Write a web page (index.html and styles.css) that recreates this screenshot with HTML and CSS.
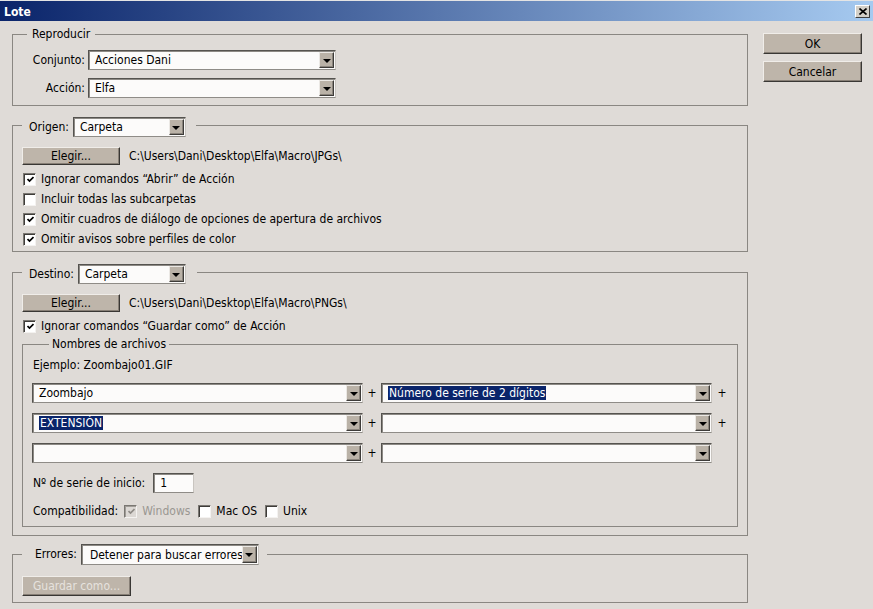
FILE: index.html
```html
<!DOCTYPE html>
<html lang="es">
<head>
<meta charset="utf-8">
<title>Lote</title>
<link rel="stylesheet" href="styles.css">
</head>
<body>
<div class="window">
  <div class="titlebar">
    <span class="title">Lote</span>
    <span class="close"><svg width="8" height="7" viewBox="0 0 8 7"><path d="M0.5 0.5 L7.5 6.5 M7.5 0.5 L0.5 6.5" stroke="#000" stroke-width="1.6" fill="none"/></svg></span>
  </div>
  <div class="content">
    <div class="main">
      <fieldset class="grp g-repro">
        <legend class="lg-text">Reproducir</legend>
        <div class="form-grid">
          <span class="flabel">Conjunto:</span>
          <div class="select s-repro"><span class="val">Acciones Dani</span><span class="arrow"><span class="tri"></span></span></div>
          <span class="flabel">Acción:</span>
          <div class="select s-repro"><span class="val">Elfa</span><span class="arrow"><span class="tri"></span></span></div>
        </div>
      </fieldset>

      <fieldset class="grp g-origen">
        <legend class="lg-ctrl lg-origen"><div class="lg-row"><span class="lg-label">Origen:</span><div class="select s-origen"><span class="val">Carpeta</span><span class="arrow"><span class="tri"></span></span></div></div></legend>
        <div class="path-row"><button class="btn btn-elegir">Elegir...</button><span class="path">C:\Users\Dani\Desktop\Elfa\Macro\JPGs\</span></div>
        <div class="chk-list">
          <div class="chk-row"><span class="cb"><svg class="tick" width="7" height="7" viewBox="0 0 7 7"><polyline points="0.5,3 2.5,5 6.5,1" stroke="#000" stroke-width="1.7" fill="none"/></svg></span><span>Ignorar comandos “Abrir” de Acción</span></div>
          <div class="chk-row"><span class="cb"></span><span>Incluir todas las subcarpetas</span></div>
          <div class="chk-row"><span class="cb"><svg class="tick" width="7" height="7" viewBox="0 0 7 7"><polyline points="0.5,3 2.5,5 6.5,1" stroke="#000" stroke-width="1.7" fill="none"/></svg></span><span>Omitir cuadros de diálogo de opciones de apertura de archivos</span></div>
          <div class="chk-row"><span class="cb"><svg class="tick" width="7" height="7" viewBox="0 0 7 7"><polyline points="0.5,3 2.5,5 6.5,1" stroke="#000" stroke-width="1.7" fill="none"/></svg></span><span>Omitir avisos sobre perfiles de color</span></div>
        </div>
      </fieldset>

      <fieldset class="grp g-destino">
        <legend class="lg-ctrl lg-destino"><div class="lg-row"><span class="lg-label">Destino:</span><div class="select s-destino"><span class="val">Carpeta</span><span class="arrow"><span class="tri"></span></span></div></div></legend>
        <div class="path-row"><button class="btn btn-elegir">Elegir...</button><span class="path">C:\Users\Dani\Desktop\Elfa\Macro\PNGs\</span></div>
        <div class="chk-row chk-single"><span class="cb"><svg class="tick" width="7" height="7" viewBox="0 0 7 7"><polyline points="0.5,3 2.5,5 6.5,1" stroke="#000" stroke-width="1.7" fill="none"/></svg></span><span>Ignorar comandos “Guardar como” de Acción</span></div>

        <fieldset class="grp g-nombres">
          <legend class="lg-text lg-nombres">Nombres de archivos</legend>
          <div class="ejemplo">Ejemplo: Zoombajo01.GIF</div>
          <div class="name-grid">
            <div class="select"><span class="val">Zoombajo</span><span class="arrow"><span class="tri"></span></span></div>
            <span class="plus">+</span>
            <div class="select"><span class="val"><span class="hl">Número de serie de 2 dígitos</span></span><span class="arrow"><span class="tri"></span></span></div>
            <span class="plus">+</span>

            <div class="select"><span class="val"><span class="hl">EXTENSIÓN</span></span><span class="arrow"><span class="tri"></span></span></div>
            <span class="plus">+</span>
            <div class="select"><span class="val"></span><span class="arrow"><span class="tri"></span></span></div>
            <span class="plus">+</span>

            <div class="select"><span class="val"></span><span class="arrow"><span class="tri"></span></span></div>
            <span class="plus">+</span>
            <div class="select"><span class="val"></span><span class="arrow"><span class="tri"></span></span></div>
            <span class="plus"></span>
          </div>
          <div class="serie-row"><span>Nº de serie de inicio:</span><div class="textbox">1</div></div>
          <div class="compat-row">
            <span class="compat-label">Compatibilidad:</span>
            <span class="opt disabled"><span class="cb cb-disabled"><svg class="tick" width="7" height="7" viewBox="0 0 7 7"><polyline points="0.5,3 2.5,5 6.5,1" stroke="#8f8b86" stroke-width="1.7" fill="none"/></svg></span><span>Windows</span></span>
            <span class="opt"><span class="cb"></span><span>Mac OS</span></span>
            <span class="opt"><span class="cb"></span><span>Unix</span></span>
          </div>
        </fieldset>
      </fieldset>

      <fieldset class="grp g-errores">
        <legend class="lg-ctrl lg-errores"><div class="lg-row lg-row-err"><span class="lg-label">Errores:</span><div class="select s-err"><span class="val">Detener para buscar errores</span><span class="arrow"><span class="tri"></span></span></div></div></legend>
        <button class="btn btn-guardar" disabled>Guardar como...</button>
      </fieldset>
    </div>
    <div class="side">
      <button class="btn btn-side">OK</button>
      <button class="btn btn-side">Cancelar</button>
    </div>
  </div>
</div>
</body>
</html>
```

FILE: styles.css
```css
html, body {
  margin: 0;
  padding: 0;
}
body {
  width: 873px;
  height: 609px;
  overflow: hidden;
  background: #dfdbd7;
  font-family: "DejaVu Sans Condensed", "Liberation Sans", sans-serif;
  font-size: 12px;
  color: #000;
}
.window {
  display: flex;
  flex-direction: column;
  height: 609px;
}
.titlebar {
  height: 21px;
  box-sizing: border-box;
  border-top: 1px solid #e4e4e4;
  background: linear-gradient(to right, #0a246a, #a6caf0);
  display: flex;
  align-items: center;
  justify-content: space-between;
  padding: 0 3px 0 4px;
}
.title {
  color: #fff;
  font-weight: bold;
  font-size: 12px;
  padding-top: 1px;
}
.close {
  width: 15px;
  height: 13px;
  box-sizing: border-box;
  background: #d4d0c8;
  border: 1px solid;
  border-color: #fff #404040 #404040 #fff;
  display: flex;
  align-items: center;
  justify-content: center;
}
.close svg { display: block; }

.content {
  display: flex;
  gap: 15px;
  padding: 6px 0 0 12px;
}
.main {
  width: 736px;
  display: flex;
  flex-direction: column;
}
.side {
  width: 99px;
  display: flex;
  flex-direction: column;
  gap: 7px;
  padding-top: 6px;
}

/* group boxes */
.grp {
  margin: 0;
  min-width: 0;
  border: 1px solid #8a8782;
  border-radius: 0;
}
legend {
  padding: 0;
}
.lg-text {
  line-height: 14px;
}
.lg-row {
  display: flex;
  align-items: flex-start;
  gap: 4px;
  height: 16px;
}
.lg-label {
  line-height: 20px;
}
.lg-row .select {
  flex: none;
}
.lg-row-err {
  height: 21px;
}
.lg-row-err .lg-label {
  line-height: 21px;
}

.g-repro {
  padding: 9px 0 7px 0;
}
.g-repro > legend {
  margin-left: 14px;
  padding: 0 5px;
}
.g-origen {
  margin-top: 11px;
  padding: 14px 9px 2px 9px;
}
.g-destino {
  margin-top: 12px;
  padding: 14px 9px 8px 9px;
}
.lg-origen {
  padding: 0 10px 0 7px;
}
.lg-destino {
  padding: 0 11px 0 7px;
}
.g-errores {
  margin-top: 8px;
  padding: 11px 9px 6px 9px;
}
.lg-errores {
  padding: 0 8px 0 13px;
}
.g-nombres {
  margin-top: 1px;
  padding: 4px 9px 5px 9px;
}
.lg-nombres {
  margin-left: 17px;
  padding: 0 3px;
}

/* form grid in Reproducir */
.form-grid {
  display: grid;
  grid-template-columns: 72px 248px;
  column-gap: 3px;
  row-gap: 8px;
  align-items: center;
}
.flabel {
  text-align: right;
}

/* dropdown */
.select {
  height: 20px;
  box-sizing: border-box;
  display: flex;
  align-items: stretch;
  background: #fcfbfa;
  border: 1px solid;
  border-color: #55534f #c9c5c0 #8f8c87 #55534f;
  box-shadow: inset 1px 1px 0 #8d8a85;
  padding: 1px;
}
.select .val {
  flex: 1;
  display: flex;
  align-items: center;
  padding-left: 5px;
  overflow: hidden;
  white-space: nowrap;
}
.arrow {
  width: 15px;
  box-sizing: border-box;
  background: #bab2a7;
  border: 1px solid;
  border-color: #ebe8e4 #3d3b38 #3d3b38 #ebe8e4;
  box-shadow: inset -1px -1px 0 #8a847c;
  display: flex;
  align-items: center;
  justify-content: center;
  flex: none;
}
.tri {
  width: 0;
  height: 0;
  border-left: 4px solid transparent;
  border-right: 4px solid transparent;
  border-top: 4px solid #000;
  margin-top: 1px;
}
.s-repro { width: 248px; }
.s-origen { width: 113px; }
.s-destino { width: 108px; }
.s-err { width: 178px; height: 21px; }
.s-err .val { padding-left: 7px; }

.hl {
  background: #0a246a;
  color: #fff;
  line-height: 14px;
  padding: 0 1px;
}

/* buttons */
.btn {
  box-sizing: border-box;
  margin: 0;
  padding: 0;
  font: inherit;
  color: #000;
  background: #beb5aa;
  border: 1px solid;
  border-color: #f0ede9 #393734 #393734 #f0ede9;
  box-shadow: inset -1px -1px 0 #877f76;
  border-radius: 0;
}
.btn-side {
  width: 99px;
  height: 21px;
}
.btn-elegir {
  width: 98px;
  height: 18px;
}
.btn-guardar {
  width: 109px;
  height: 20px;
  color: #e6e2de;
  display: block;
}

.path-row {
  display: flex;
  align-items: center;
  gap: 9px;
}
.chk-list {
  margin-top: 4px;
  display: flex;
  flex-direction: column;
}
.chk-row {
  display: flex;
  align-items: center;
  gap: 5px;
  height: 20px;
  padding-left: 1px;
}
.chk-single {
  margin-top: 4px;
}

/* checkbox */
.cb {
  width: 13px;
  height: 13px;
  box-sizing: border-box;
  background: #fff;
  border: 1px solid;
  border-color: #7a7772 #f4f2f0 #f4f2f0 #7a7772;
  box-shadow: inset 1px 1px 0 #3e3c39;
  display: flex;
  align-items: center;
  justify-content: center;
  flex: none;
}
.cb .tick { display: block; margin: 1px 0 0 1px; }
.cb-disabled {
  background: #dcd8d4;
  box-shadow: inset 1px 1px 0 #a09c97;
}

/* nombres */
.ejemplo {
  height: 20px;
  line-height: 20px;
  padding-left: 1px;
}
.name-grid {
  margin-top: 8px;
  display: grid;
  grid-template-columns: 331px 18px 331px 20px;
  row-gap: 10px;
  align-items: center;
}
.plus {
  text-align: center;
}
.serie-row {
  margin-top: 10px;
  display: flex;
  align-items: center;
  gap: 8px;
  padding-left: 1px;
}
.textbox {
  width: 41px;
  height: 20px;
  box-sizing: border-box;
  background: #fcfbfa;
  border: 1px solid;
  border-color: #55534f #c9c5c0 #8f8c87 #55534f;
  box-shadow: inset 1px 1px 0 #8d8a85;
  padding-left: 6px;
  display: flex;
  align-items: center;
}
.compat-row {
  margin-top: 8px;
  height: 20px;
  display: flex;
  align-items: center;
  gap: 8px;
  padding-left: 1px;
}
.compat-label {
  margin-right: -2px;
}
.opt {
  display: flex;
  align-items: center;
  gap: 5px;
}
.opt.disabled {
  color: #9a9792;
}
```
